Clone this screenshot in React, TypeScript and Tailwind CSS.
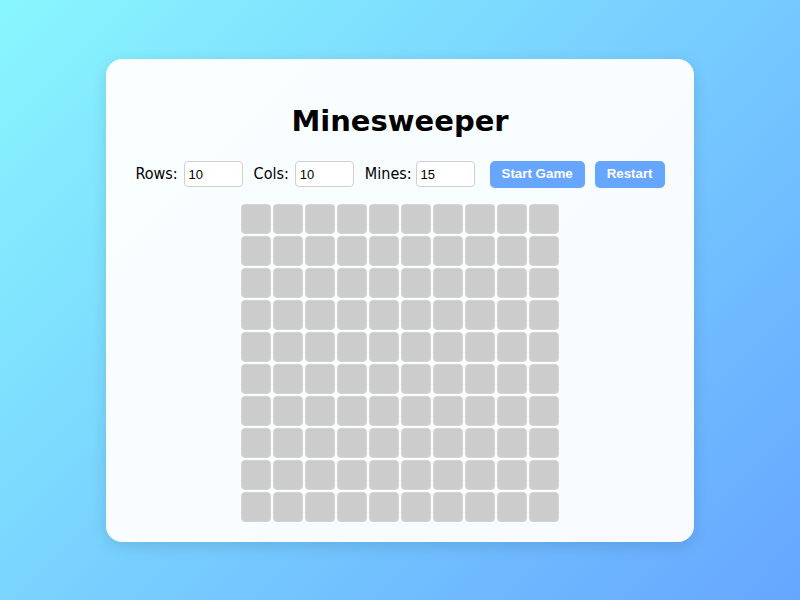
import React from "react";

const inputCls =
  "w-[59px] h-[26px] rounded-[4px] border border-[#cfcfcf] bg-white px-[4px] text-[13px] text-black outline-none [font-family:'Liberation_Sans',Arial,sans-serif]";
const btnCls =
  "h-[27px] rounded-[5px] bg-[#66a6ff] text-white text-[13.33px] font-bold [font-family:'Liberation_Sans',Arial,sans-serif]";

export default function App() {
  const cells = Array.from({ length: 100 });
  return (
    <div className="w-[800px] h-[600px] flex items-center justify-center bg-[linear-gradient(135deg,#89f7fe_0%,#66a6ff_100%)]">
      <div className="w-[588px] h-[483px] rounded-[16px] bg-white/95 shadow-[0_4px_16px_rgba(0,0,0,0.12)] flex flex-col items-center pt-[40px] [font-family:'DejaVu_Sans_Condensed','DejaVu_Sans',sans-serif]">
        <h1 className="text-[29px] leading-[44px] font-bold text-black [font-family:'DejaVu_Sans',sans-serif]">
          Minesweeper
        </h1>
        <div className="mt-[18px] flex items-center text-[16px] text-black">
          <label className="flex items-center">
            Rows:
            <input defaultValue="10" className={"ml-[6px] " + inputCls} />
          </label>
          <label className="ml-[11px] flex items-center">
            Cols:
            <input defaultValue="10" className={"ml-[6px] " + inputCls} />
          </label>
          <label className="ml-[11px] flex items-center">
            Mines:
            <input defaultValue="15" className={"ml-[4px] " + inputCls} />
          </label>
          <button className={"ml-[15px] w-[95px] " + btnCls}>Start Game</button>
          <button className={"ml-[10px] w-[70px] " + btnCls}>Restart</button>
        </div>
        <div className="mt-[16px] grid grid-cols-[repeat(10,30px)] gap-[2px]">
          {cells.map((_, i) => (
            <div key={i} className="w-[30px] h-[30px] rounded-[4px] bg-[#cccccc] border border-[#d4d4d4]" />
          ))}
        </div>
      </div>
    </div>
  );
}
